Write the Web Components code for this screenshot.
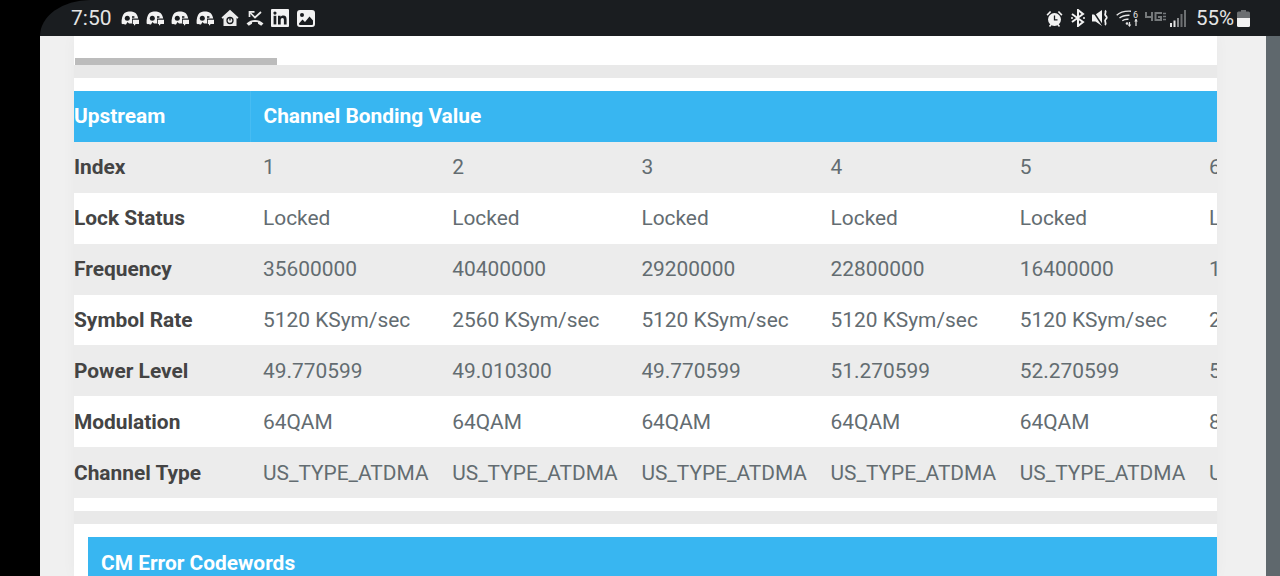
<!DOCTYPE html>
<html>
<head>
<meta charset="utf-8">
<style>
    html, body { margin: 0; height: 576px; overflow: hidden; background: #000; font-family: 'Roboto', sans-serif; }
</style>
</head>
<body>
<device-frame>
    <status-bar slot="status"></status-bar>
    <scroll-stub></scroll-stub>
    <bonding-table title="Upstream" heading="Channel Bonding Value"></bonding-table>
    <error-card>CM Error Codewords</error-card>
</device-frame>

<script>
const ICON_DISCORD = `<svg width="18" height="15" viewBox="0 0 18 15">
    <path fill="#f2f2f2" d="M.6 12.500C.3 8 1.500 4 3.500 2 5.500 .8 7.500 .5 9 .5s3.500 .3 5.500 1.500c1.300 1.300 2.200 3.200 2.700 5.500H11v5H8L6.500 11 5 13.400C3 13.500 1.500 13.200 .6 12.500z"/>
    <circle cx="6.300" cy="7.300" r="2.500" fill="#1a1d20"/>
    <path fill="#1a1d20" d="M11 5.200h2.400v1.600H11z"/>
    <path fill="#f2f2f2" d="M11.800 8.800H18V13h-3.300L13.200 14.800 12.800 13h-1z"/>
</svg>`;

class StatusBar extends HTMLElement {
    constructor() {
        super();
        this.attachShadow({mode: 'open'});
        this.shadowRoot.innerHTML = `
        <style>
            :host { display: flex; align-items: center; justify-content: space-between; height: 36px; margin-left: 40px; background: #1a1d20; color: #e4e4e4; border-top-left-radius: 50px 36px; font-size: 21px; }
            .left, .right { display: flex; align-items: center; }
            .left { padding-left: 31px; }
            .right { padding-right: 30px; }
            .time { width: 50px; }
            .icons { display: flex; align-items: center; gap: 7px; }
            svg { display: block; }
            .pct { margin-left: 9px; margin-right: 3px; font-size: 20.5px; }
            .net { margin-left: 5px; }
            .sig { margin-left: 4px; }
        </style>
        <div class="left">
            <span class="time">7:50</span>
            <div class="icons">
                ${ICON_DISCORD}${ICON_DISCORD}${ICON_DISCORD}${ICON_DISCORD}
                <svg width="18" height="18" viewBox="0 0 18 18">
                    <path fill="#ececec" d="M9 .8 17.500 8.600 16.500 9.800 15.500 9V17H2.500V9L1.500 9.800.5 8.600z"/>
                    <circle cx="9" cy="11.500" r="3" fill="none" stroke="#1a1d20" stroke-width="1.300"/>
                    <path stroke="#1a1d20" stroke-width="1.300" d="M9 8v3.500"/>
                </svg>
                <svg width="18" height="16" viewBox="0 0 18 16">
                    <path fill="#ececec" d="M.5 13.500C3 11 6 10 9 10s6 1 8.500 3.500l-2.300 2.300-3.200-2v-1.500C10.500 12 7.500 12 6 12.300v1.500l-3.200 2z"/>
                    <path fill="none" stroke="#ececec" stroke-width="1.700" d="M4 2.500 9 7.500 15 2"/>
                    <path fill="none" stroke="#ececec" stroke-width="1.700" d="M3.500 7V1.800H8.500"/>
                </svg>
                <svg width="18" height="18" viewBox="0 0 18 18">
                    <rect width="18" height="18" rx="1" fill="#f2f2f2"/>
                    <rect x="2.600" y="6.800" width="2.700" height="8.600" fill="#1a1d20"/>
                    <circle cx="3.950" cy="4.100" r="1.600" fill="#1a1d20"/>
                    <path fill="#1a1d20" d="M7 6.800h2.600V8c.6-.9 1.600-1.400 2.800-1.400 2.300 0 3.200 1.400 3.200 3.800v5h-2.700v-4.500c0-1.200-.4-2-1.400-2-1.100 0-1.800.8-1.800 2.100v4.400H7z"/>
                </svg>
                <svg width="18" height="17" viewBox="0 0 18 17" style="margin-left:1px">
                    <path fill="#f2f2f2" fill-rule="evenodd" d="M3 0h12a3 3 0 0 1 3 3v11a3 3 0 0 1-3 3H3a3 3 0 0 1-3-3V3a3 3 0 0 1 3-3zM2 13.500V14a1 1 0 0 0 1 1h12a1 1 0 0 0 1-1V10.500L12.500 6.500 8 12 5.500 9.500z"/>
                    <circle cx="5" cy="5" r="2" fill="#1a1d20"/>
                </svg>
            </div>
        </div>
        <div class="right">
            <div class="icons">
                <svg width="17" height="17" viewBox="0 0 17 17">
                    <circle cx="8.500" cy="9.500" r="6.500" fill="#f2f2f2"/>
                    <path fill="none" stroke="#1a1d20" stroke-width="1.300" d="M8.500 5.500v4.300h3"/>
                    <path fill="#f2f2f2" d="M.5 4.500 4 1l1.200 1-3.500 3.700zM16.500 4.500 13 1l-1.200 1 3.500 3.700z"/>
                    <path stroke="#f2f2f2" stroke-width="1.600" d="M3.500 16.500l2-2.500M13.500 16.500l-2-2.500"/>
                </svg>
                <svg width="16" height="18" viewBox="0 0 16 18">
                    <path fill="none" stroke="#f2f2f2" stroke-width="2" d="M2 5 13 13 8 17V1L13 5 2 13"/>
                    <circle cx="2" cy="9" r="1" fill="#f2f2f2"/>
                    <circle cx="14" cy="9" r="1" fill="#f2f2f2"/>
                </svg>
                <svg width="17" height="18" viewBox="0 0 17 18" style="margin-left:-1px">
                    <path fill="#f2f2f2" d="M0 5.500h3.500L10 1v16L3.500 12.500H0z"/>
                    <path stroke="#1a1d20" stroke-width="1.500" d="M.5 1.500l10 15"/>
                    <path fill="none" stroke="#f2f2f2" stroke-width="1.800" d="M13 1.500c2.200 1.700-1.200 3.300.5 5s1.700 2.200 0 4 1.700 3.800-.5 5.500"/>
                </svg>
                <svg width="24" height="18" viewBox="0 0 24 18">
                    <g fill="none" stroke="#e4e4e4" stroke-width="1.400">
                        <path d="M.7 6.200C4 3 8 1.800 15 2.200"/>
                        <path d="M3.500 9C6 6.800 9 6 13.500 6.200"/>
                        <path d="M6.300 11.700C8 10.400 10 10 12.500 10.300"/>
                    </g>
                    <circle cx="11" cy="14.500" r="1.300" fill="#e4e4e4"/>
                    <path stroke="#e4e4e4" stroke-width="1.200" d="M13.500 13v4M20 10v7"/>
                    <path fill="#e4e4e4" d="M11.700 15.500h3.600L13.500 18zM18.200 12.500h3.600L20 9.800z"/>
                    <text x="17" y="8.500" font-size="9" font-family="Roboto" fill="#e4e4e4">6</text>
                </svg>
            </div>
            <svg class="net" width="21" height="12" viewBox="0 0 21 12">
                <path fill="none" stroke="#75797b" stroke-width="2" d="M1 0v5h6M7 0v9M17 1H10.500v7H16V5h-3"/>
                <path stroke="#75797b" stroke-width="1.400" d="M18 1.500h3M18 4.500h3M18 7.500h3"/>
            </svg>
            <svg class="sig" width="17" height="17" viewBox="0 0 17 17">
                <rect x="0" y="13" width="2" height="4" fill="#e4e4e4"/>
                <rect x="3.500" y="10.500" width="2" height="6.500" fill="#e4e4e4"/>
                <rect x="7" y="8" width="2" height="9" fill="#8a8c8e"/>
                <rect x="10.500" y="4" width="2" height="13" fill="#6c6f71"/>
                <rect x="14" y="0" width="2" height="17" fill="#6c6f71"/>
            </svg>
            <span class="pct">55%</span>
            <svg width="13" height="17" viewBox="0 0 13 17">
                <path fill="#6c6f71" d="M4 0h5v1.500h2.500A1.500 1.500 0 0 1 13 3v5H0V3a1.500 1.500 0 0 1 1.500-1.500H4z"/>
                <path fill="#f2f2f2" d="M0 8h13v7.500a1.500 1.500 0 0 1-1.500 1.500h-10A1.500 1.500 0 0 1 0 15.500z"/>
            </svg>
        </div>`;
    }
}
customElements.define('status-bar', StatusBar);

const frameTemplate = document.createElement('template');
frameTemplate.innerHTML = `
    <style>
        :host { display: grid; grid-template-columns: 40px 1fr 14px; grid-template-rows: 36px 1fr; height: 576px; }
        .bar { grid-column: 1 / 4; background: #000; }
        .page { background: #f0f0f0; padding: 0 49px 0 34px; overflow: hidden; }
        .column { background: #e9e9e9; height: 100%; display: flex; flex-direction: column; gap: 13px; box-shadow: 0 0 14px rgba(0,0,0,.035); }
        .edge { background: #5f686d; }
        .black { background: #000; }
    </style>
    <div class="bar"><slot name="status"></slot></div>
    <div class="black"></div>
    <div class="page"><div class="column"><slot></slot></div></div>
    <div class="edge"></div>
`;
class DeviceFrame extends HTMLElement {
    constructor() {
        super();
        this.attachShadow({mode: 'open'});
        this.shadowRoot.appendChild(frameTemplate.content.cloneNode(true));
    }
}
customElements.define('device-frame', DeviceFrame);

class ScrollStub extends HTMLElement {
    constructor() {
        super();
        this.attachShadow({mode: 'open'});
        this.shadowRoot.innerHTML = `
        <style>
            :host { display: flex; flex-direction: column; justify-content: flex-end; background: #fff; height: 29px; flex: none; }
            .thumb { width: 202px; height: 7px; margin-left: 1px; background: #bcbcbc; }
        </style>
        <div class="thumb"></div>`;
    }
}
customElements.define('scroll-stub', ScrollStub);

const rows = [
    ['Index', '1', '2', '3', '4', '5', '6'],
    ['Lock Status', 'Locked', 'Locked', 'Locked', 'Locked', 'Locked', 'Locked'],
    ['Frequency', '35600000', '40400000', '29200000', '22800000', '16400000', '1'],
    ['Symbol Rate', '5120 KSym/sec', '2560 KSym/sec', '5120 KSym/sec', '5120 KSym/sec', '5120 KSym/sec', '2'],
    ['Power Level', '49.770599', '49.010300', '49.770599', '51.270599', '52.270599', '5'],
    ['Modulation', '64QAM', '64QAM', '64QAM', '64QAM', '64QAM', '8'],
    ['Channel Type', 'US_TYPE_ATDMA', 'US_TYPE_ATDMA', 'US_TYPE_ATDMA', 'US_TYPE_ATDMA', 'US_TYPE_ATDMA', 'US_TYPE_ATDMA'],
];

class BondingTable extends HTMLElement {
    connectedCallback() {
        if (this.shadowRoot) return;
        this.attachShadow({mode: 'open'});
        const body = rows.map(r => `<tr>
            <th>${r[0]}</th>${r.slice(1).map(v => `<td>${v}</td>`).join('')}
        </tr>`).join('');
        this.shadowRoot.innerHTML = `
        <style>
            :host { display: block; flex: none; background: #fff; padding: 13px 0; overflow: hidden; }
            table { border-collapse: collapse; table-layout: fixed; width: 1311.2px; font-size: 20.9px; }
            col.first { width: 176px; }
            tr { height: 50.875px; }
            thead tr { background: #38b6f1; color: #fff; }
            thead th { font-weight: 700; text-align: left; padding: 0; }
            thead th + th { padding-left: 13px; border-left: 1px solid #47bcf2; }
            tbody tr:nth-child(odd) { background: #ececec; }
            tbody th { font-weight: 700; text-align: left; padding: 0; color: #444; }
            td { padding: 0 0 0 13px; color: #636c71; white-space: nowrap; overflow: hidden; }
        </style>
        <table>
            <colgroup><col class="first"><col span="6" style="width:189.2px"></colgroup>
            <thead><tr><th>${this.getAttribute('title')}</th><th colspan="6">${this.getAttribute('heading')}</th></tr></thead>
            <tbody>${body}</tbody>
        </table>`;
    }
}
customElements.define('bonding-table', BondingTable);

class ErrorCard extends HTMLElement {
    constructor() {
        super();
        this.attachShadow({mode: 'open'});
        this.shadowRoot.innerHTML = `
        <style>
            :host { display: block; flex: none; background: #fff; padding: 13px 0 0 14px; height: 60px; }
            .head { background: #38b6f1; color: #fff; font-weight: 700; font-size: 20.9px; height: 50px; line-height: 52px; padding-left: 13px; }
        </style>
        <div class="head"><slot></slot></div>`;
    }
}
customElements.define('error-card', ErrorCard);
</script>
</body>
</html>
